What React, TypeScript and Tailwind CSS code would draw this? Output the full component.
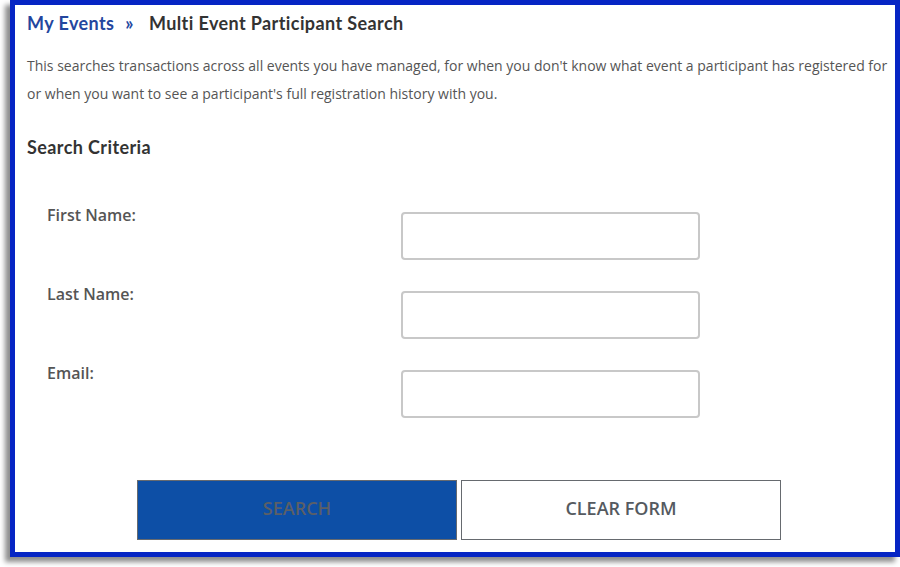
import React from 'react';

const fields = [
  { label: 'First Name:', id: 'first-name' },
  { label: 'Last Name:', id: 'last-name' },
  { label: 'Email:', id: 'email' },
];

export default function App() {
  return (
    <div className="w-[900px] h-[567px] bg-white overflow-hidden">
      <div className="ml-[10px] w-[890px] h-[557px] border-[5px] border-[#0625c4] bg-white shadow-[-5px_5px_5px_rgba(0,0,0,0.45)] pl-[12px] pr-[3px] pt-[6px]">
        {/* breadcrumb */}
        <div className="flex items-center text-[18px] leading-[24px] font-bold tracking-[0.4px] font-['Lato','Open_Sans',sans-serif]">
          <a href="#" className="text-[#23469e]">My Events</a>
          <span className="text-[#23469e] ml-[11px] mr-[15px]">»</span>
          <span className="text-[#333333]">Multi Event Participant Search</span>
        </div>

        <p className="mt-[17px] text-[14px] leading-[28px] text-[#555555] font-['Open_Sans',sans-serif]">
          This searches transactions across all events you have managed, for when you don't know what event a participant has registered for
          or when you want to see a participant's full registration history with you.
        </p>

        <h3 className="mt-[27px] text-[18px] leading-[24px] font-bold tracking-[0.4px] text-[#333333] font-['Lato','Open_Sans',sans-serif]">
          Search Criteria
        </h3>

        <div className="mt-[46px] flex flex-col gap-[24px] pl-[20px]">
          {fields.map((f) => (
            <div key={f.id} className="flex items-start">
              <label
                htmlFor={f.id}
                className="w-[354px] text-[16px] leading-5 font-semibold text-[#555555] font-['Open_Sans',sans-serif]"
              >
                {f.label}
              </label>
              <input
                id={f.id}
                type="text"
                className="mt-[7px] w-[299px] h-[48px] rounded-[4px] border-2 border-[#c8c8c8] bg-white px-3 outline-none"
              />
            </div>
          ))}
        </div>

        <div className="mt-[62px] flex gap-[4px] pl-[110px]">
          <button className="w-[320px] h-[60px] pb-[3px] bg-[#0d4fa6] border border-[#666a6f] text-[18px] font-semibold text-[#5b5f66] font-['Open_Sans',sans-serif]">
            SEARCH
          </button>
          <button className="w-[320px] h-[60px] pb-[3px] bg-white border border-[#666a6f] text-[18px] font-semibold text-[#555a60] font-['Open_Sans',sans-serif]">
            CLEAR FORM
          </button>
        </div>
      </div>
    </div>
  );
}
